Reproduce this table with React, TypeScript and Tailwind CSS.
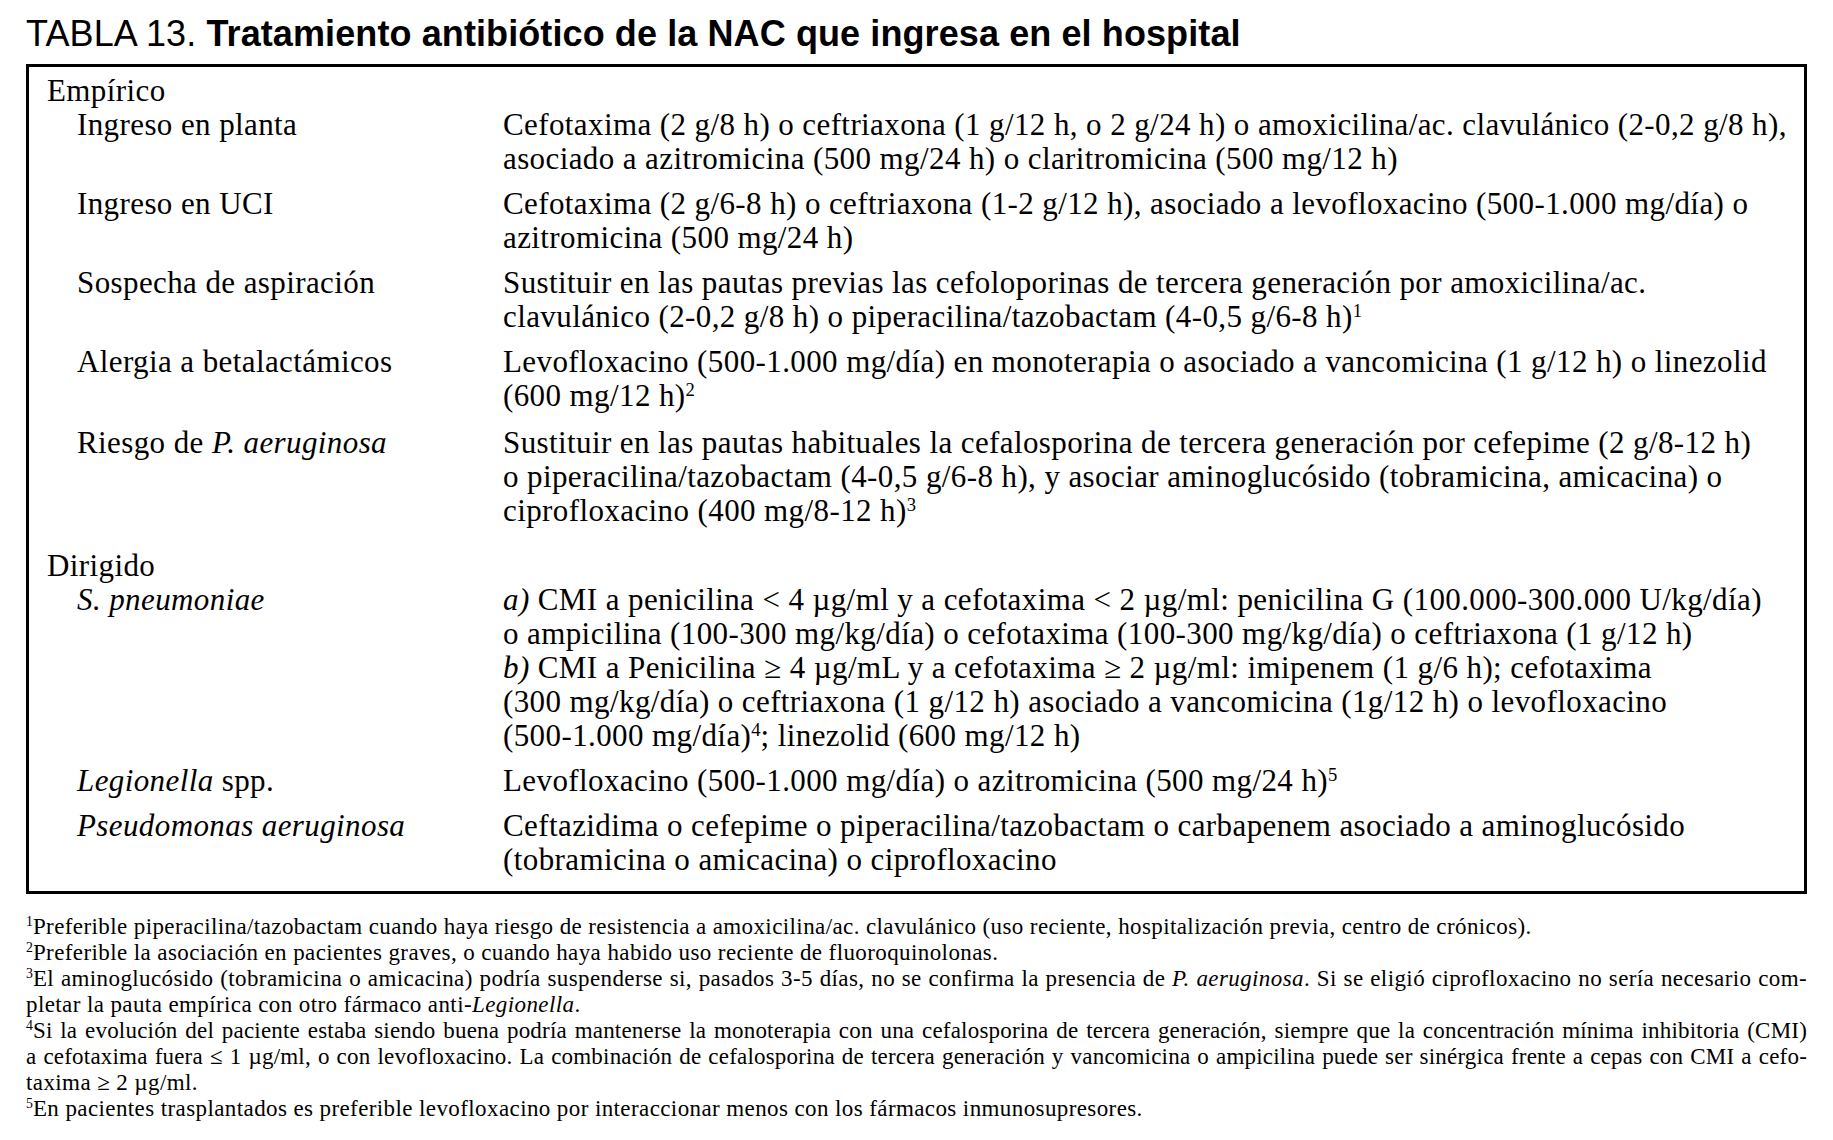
import React from "react";

type Row = {
  label: React.ReactNode;
  lines: React.ReactNode[];
  extraTop?: boolean;
};

const empirico: Row[] = [
  {
    label: "Ingreso en planta",
    lines: [
      "Cefotaxima (2 g/8 h) o ceftriaxona (1 g/12 h, o 2 g/24 h) o amoxicilina/ac. clavulánico (2-0,2 g/8 h),",
      "asociado a azitromicina (500 mg/24 h) o claritromicina (500 mg/12 h)",
    ],
  },
  {
    label: "Ingreso en UCI",
    lines: [
      "Cefotaxima (2 g/6-8 h) o ceftriaxona (1-2 g/12 h), asociado a levofloxacino (500-1.000 mg/día) o",
      "azitromicina (500 mg/24 h)",
    ],
  },
  {
    label: "Sospecha de aspiración",
    lines: [
      "Sustituir en las pautas previas las cefoloporinas de tercera generación por amoxicilina/ac.",
      <>
        clavulánico (2-0,2 g/8 h) o piperacilina/tazobactam (4-0,5 g/6-8 h)<Sup>1</Sup>
      </>,
    ],
  },
  {
    label: "Alergia a betalactámicos",
    lines: [
      "Levofloxacino (500-1.000 mg/día) en monoterapia o asociado a vancomicina (1 g/12 h) o linezolid",
      <>
        (600 mg/12 h)<Sup>2</Sup>
      </>,
    ],
  },
  {
    label: (
      <>
        Riesgo de <i>P. aeruginosa</i>
      </>
    ),
    lines: [
      "Sustituir en las pautas habituales la cefalosporina de tercera generación por cefepime (2 g/8-12 h)",
      "o piperacilina/tazobactam (4-0,5 g/6-8 h), y asociar aminoglucósido (tobramicina, amicacina) o",
      <>
        ciprofloxacino (400 mg/8-12 h)<Sup>3</Sup>
      </>,
    ],
    extraTop: true,
  },
];

const dirigido: Row[] = [
  {
    label: <i>S. pneumoniae</i>,
    lines: [
      <>
        <i>a)</i> CMI a penicilina &lt; 4 µg/ml y a cefotaxima &lt; 2 µg/ml: penicilina G (100.000-300.000 U/kg/día)
      </>,
      "o ampicilina (100-300 mg/kg/día) o cefotaxima (100-300 mg/kg/día) o ceftriaxona (1 g/12 h)",
      <>
        <i>b)</i> CMI a Penicilina ≥ 4 µg/mL y a cefotaxima ≥ 2 µg/ml: imipenem (1 g/6 h); cefotaxima
      </>,
      "(300 mg/kg/día) o ceftriaxona (1 g/12 h) asociado a vancomicina (1g/12 h) o levofloxacino",
      <>
        (500-1.000 mg/día)<Sup>4</Sup>; linezolid (600 mg/12 h)
      </>,
    ],
  },
  {
    label: (
      <>
        <i>Legionella</i> spp.
      </>
    ),
    lines: [
      <>
        Levofloxacino (500-1.000 mg/día) o azitromicina (500 mg/24 h)<Sup>5</Sup>
      </>,
    ],
  },
  {
    label: <i>Pseudomonas aeruginosa</i>,
    lines: [
      "Ceftazidima o cefepime o piperacilina/tazobactam o carbapenem asociado a aminoglucósido",
      "(tobramicina o amicacina) o ciprofloxacino",
    ],
  },
];

function Sup({ children }: { children: React.ReactNode }) {
  return <sup className="text-[0.6em] top-[-0.55em] tracking-normal">{children}</sup>;
}

function TableRow({ row }: { row: Row }) {
  return (
    <div className={row.extraTop ? "grid grid-cols-[456px_1fr] mt-[2px]" : "grid grid-cols-[456px_1fr]"}>
      <div className="pl-[30px]">{row.label}</div>
      <div>
        {row.lines.map((line, i) => (
          <div key={i} className="whitespace-nowrap">
            {line}
          </div>
        ))}
      </div>
    </div>
  );
}

function App() {
  return (
    <div className="w-[1833px] h-[1140px] bg-white text-black pl-[26px] pt-[14px] font-['Liberation_Serif',serif]">
      <h1 className="font-['Liberation_Sans',sans-serif] text-[36px] leading-[40px] tracking-[0.1px]">
        TABLA 13. <b>Tratamiento antibiótico de la NAC que ingresa en el hospital</b>
      </h1>
      <div className="mt-[10px] w-[1781px] border-[3px] border-black pl-[18px] pt-[7px] pb-[14px] text-[31px] leading-[34px] tracking-[0.4px]">
        <div>Empírico</div>
        <div className="flex flex-col gap-[11px]">
          {empirico.map((row, i) => (
            <TableRow key={i} row={row} />
          ))}
        </div>
        <div className="mt-[21px]">Dirigido</div>
        <div className="flex flex-col gap-[11px]">
          {dirigido.map((row, i) => (
            <TableRow key={i} row={row} />
          ))}
        </div>
      </div>
      <div className="mt-[20px] w-[1781px] text-[23px] leading-[26px] tracking-[0.4px]">
        <div>
          <Sup>1</Sup>Preferible piperacilina/tazobactam cuando haya riesgo de resistencia a amoxicilina/ac. clavulánico (uso reciente, hospitalización previa, centro de crónicos).
        </div>
        <div>
          <Sup>2</Sup>Preferible la asociación en pacientes graves, o cuando haya habido uso reciente de fluoroquinolonas.
        </div>
        <div className="text-justify [text-align-last:justify] whitespace-nowrap">
          <Sup>3</Sup>El aminoglucósido (tobramicina o amicacina) podría suspenderse si, pasados 3-5 días, no se confirma la presencia de <i>P. aeruginosa</i>. Si se eligió ciprofloxacino no sería necesario com-
        </div>
        <div>
          pletar la pauta empírica con otro fármaco anti-<i>Legionella</i>.
        </div>
        <div className="text-justify [text-align-last:justify] whitespace-nowrap tracking-[0.2px]">
          <Sup>4</Sup>Si la evolución del paciente estaba siendo buena podría mantenerse la monoterapia con una cefalosporina de tercera generación, siempre que la concentración mínima inhibitoria (CMI)
        </div>
        <div className="text-justify [text-align-last:justify] whitespace-nowrap tracking-[0.2px]">
          a cefotaxima fuera ≤ 1 µg/ml, o con levofloxacino. La combinación de cefalosporina de tercera generación y vancomicina o ampicilina puede ser sinérgica frente a cepas con CMI a cefo-
        </div>
        <div>taxima ≥ 2 µg/ml.</div>
        <div>
          <Sup>5</Sup>En pacientes trasplantados es preferible levofloxacino por interaccionar menos con los fármacos inmunosupresores.
        </div>
      </div>
    </div>
  );
}

export default App;
